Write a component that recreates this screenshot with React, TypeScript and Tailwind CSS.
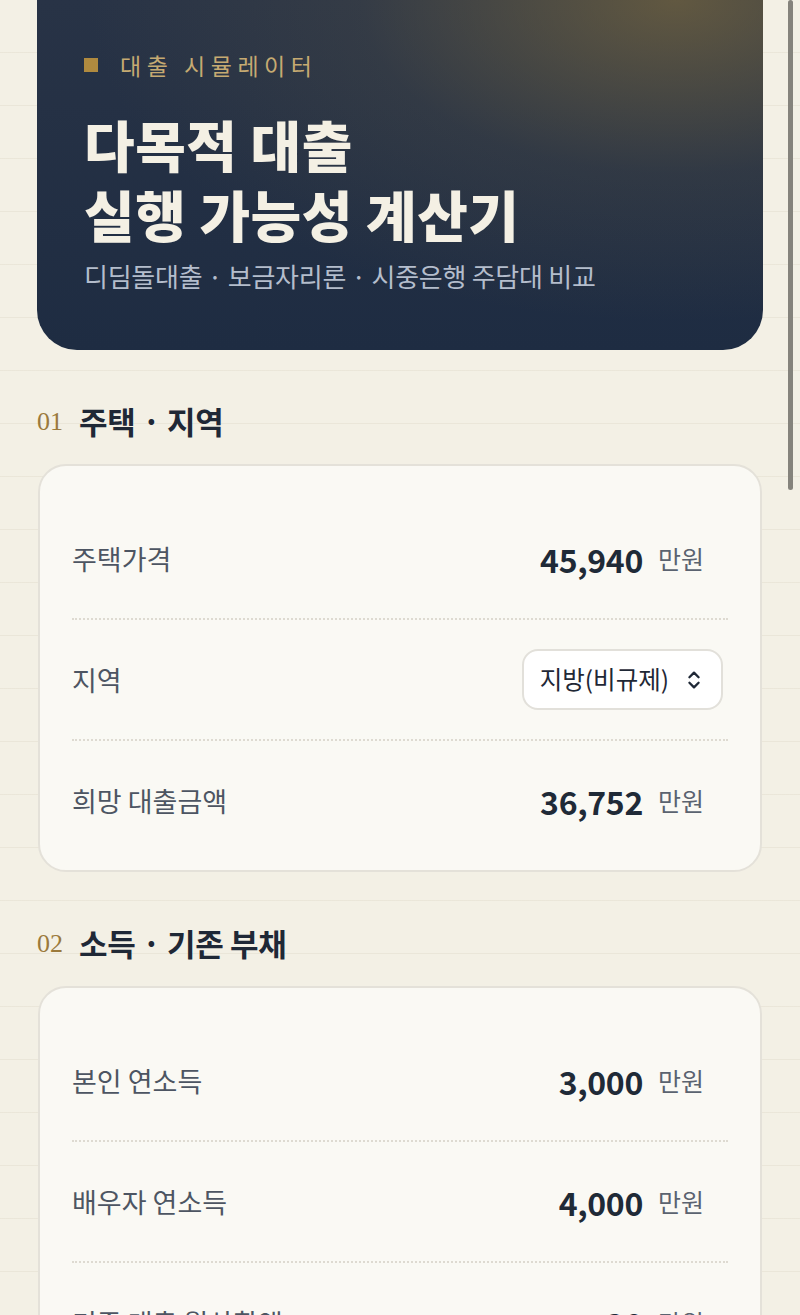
import { ChevronsUpDown } from "lucide-react";

type Row = {
  label: string;
  value?: string;
  select?: string;
};

const housingRows: Row[] = [
  { label: "주택가격", value: "45,940" },
  { label: "지역", select: "지방(비규제)" },
  { label: "희망 대출금액", value: "36,752" },
];

const incomeRows: Row[] = [
  { label: "본인 연소득", value: "3,000" },
  { label: "배우자 연소득", value: "4,000" },
  { label: "기존 대출 월상환액", value: "30" },
];

const SectionTitle = ({ num, title }: { num: string; title: string }) => (
  <div className="flex items-center gap-[16px] h-[40px]">
    <span className="font-['Liberation_Serif',serif] text-[26px] text-[#9b7a3c] leading-none pt-[3px]">
      {num}
    </span>
    <h2 className="text-[31px] font-bold text-[#1f2836] leading-none tracking-[-0.01em]">{title}</h2>
  </div>
);

const FieldRow = ({ row }: { row: Row }) => (
  <div className="flex items-center justify-between h-[119px]">
    <span className="text-[27px] text-[#4d5562] leading-none">{row.label}</span>
    {row.select ? (
      <div className="mr-[5px] flex items-center gap-[14px] h-[61px] pl-[16px] pr-[16px] rounded-[16px] border-2 border-[#e2e0da] bg-white">
        <span className="text-[24.5px] text-[#1f2836]">{row.select}</span>
        <ChevronsUpDown className="w-[22px] h-[22px] text-[#1f2836]" strokeWidth={2.5} />
      </div>
    ) : (
      <div className="flex items-center gap-[15px] pr-[24px]">
        <span className="text-[32px] leading-none font-bold text-[#1f2a37] tracking-[-0.01em]">{row.value}</span>
        <span className="text-[25px] leading-none text-[#5b6370]">만원</span>
      </div>
    )}
  </div>
);

const FieldCard = ({ rows }: { rows: Row[] }) => (
  <div className="mx-[38px] rounded-[28px] border-2 border-[#e4e1d9] bg-[#faf9f4] px-[32px] pt-[33px] pb-[10px]">
    {rows.map((row, i) => (
      <div key={row.label}>
        {i > 0 && <div className="border-t-2 border-dotted border-[#dedad1]" />}
        <FieldRow row={row} />
      </div>
    ))}
  </div>
);

export default function App() {
  return (
    <div className="relative min-h-screen bg-[#f3f0e5] bg-[repeating-linear-gradient(to_bottom,transparent_0px,transparent_52px,rgba(120,100,60,0.07)_52px,rgba(120,100,60,0.07)_53px)] font-['Noto_Sans_CJK_KR','Noto_Sans',sans-serif] pb-[80px]">
      {/* hero */}
      <div className="mx-[37px] rounded-b-[40px] bg-[radial-gradient(ellipse_at_88%_0%,rgba(128,108,62,0.65)_0%,rgba(90,85,70,0.25)_35%,transparent_65%),linear-gradient(180deg,#283346_0%,#1e2c42_100%)] pl-[47px] pr-[30px] pt-[48px] pb-[55px]">
        <div className="flex items-center gap-[22px] h-[34px]">
          <span className="w-[14px] h-[14px] bg-[#b08a3f]" />
          <span className="text-[23px] tracking-[0.24em] text-[#c6aa72]">대출 시뮬레이터</span>
        </div>
        <h1 className="mt-[26px] text-[55px] font-black leading-[70px] text-[#f4f0e4] tracking-[0.01em]">
          다목적 대출
          <br />
          실행 가능성 계산기
        </h1>
        <p className="mt-[8px] text-[26px] leading-[39px] text-[#b4bdcc] tracking-[-0.01em]">
          디딤돌대출 · 보금자리론 · 시중은행 주담대 비교
        </p>
      </div>

      <div className="mt-[50px] pl-[37px]">
        <SectionTitle num="01" title="주택 · 지역" />
      </div>
      <div className="mt-[24px]">
        <FieldCard rows={housingRows} />
      </div>

      <div className="mt-[50px] pl-[37px]">
        <SectionTitle num="02" title="소득 · 기존 부채" />
      </div>
      <div className="mt-[24px]">
        <FieldCard rows={incomeRows} />
      </div>

      {/* overlay scrollbar */}
      <div className="fixed top-0 right-[7px] w-[5px] h-[490px] rounded-full bg-[#85837c]" />
    </div>
  );
}
